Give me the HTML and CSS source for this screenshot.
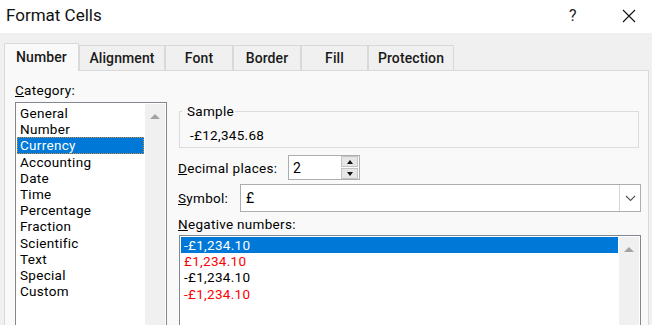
FILE: index.html
```html
<!DOCTYPE html>
<html>
<head>
<meta charset="utf-8">
<link rel="stylesheet" href="styles.css">
</head>
<body>
<div class="window">
  <header class="titlebar">
    <span class="title">Format Cells</span>
    <div class="controls">
      <span class="ctl help">?</span>
      <span class="ctl close"><svg width="14" height="14" viewBox="0 0 14 14"><path d="M1 1 L13 13 M13 1 L1 13" stroke="#111" stroke-width="1.1" fill="none"/></svg></span>
    </div>
  </header>
  <div class="dialog">
    <div class="tabs">
      <div class="tab active t-number">Number</div>
      <div class="tab t-align">Alignment</div>
      <div class="tab t-font">Font</div>
      <div class="tab t-border">Border</div>
      <div class="tab t-fill">Fill</div>
      <div class="tab t-prot">Protection</div>
    </div>
    <div class="panel">
      <div class="left">
        <div class="label"><u>C</u>ategory:</div>
        <div class="listbox cat">
          <ul class="items">
            <li>General</li>
            <li>Number</li>
            <li class="sel focus">Currency</li>
            <li>Accounting</li>
            <li>Date</li>
            <li>Time</li>
            <li>Percentage</li>
            <li>Fraction</li>
            <li>Scientific</li>
            <li>Text</li>
            <li>Special</li>
            <li>Custom</li>
          </ul>
          <div class="scrollbar"><span class="arrow-up"></span></div>
        </div>
      </div>
      <div class="right">
        <fieldset class="sample">
          <legend>Sample</legend>
          <div class="sample-value">-£12,345.68</div>
        </fieldset>
        <div class="row decimal">
          <span class="row-label"><u>D</u>ecimal places:</span>
          <div class="spin">
            <span class="spin-value">2</span>
            <div class="spin-btns">
              <span class="sb"><span class="tri-up"></span></span>
              <span class="sb"><span class="tri-down"></span></span>
            </div>
          </div>
        </div>
        <div class="row symbol">
          <span class="row-label"><u>S</u>ymbol:</span>
          <div class="select">
            <span class="select-value">£</span>
            <span class="dd"><svg width="11" height="7" viewBox="0 0 11 7"><path d="M1 1 L5.5 5.5 L10 1" stroke="#555" stroke-width="1.1" fill="none"/></svg></span>
          </div>
        </div>
        <div class="label neg-label"><u>N</u>egative numbers:</div>
        <div class="listbox neg">
          <ul class="items">
            <li class="sel">-£1,234.10</li>
            <li class="red">£1,234.10</li>
            <li>-£1,234.10</li>
            <li class="red">-£1,234.10</li>
          </ul>
          <div class="scrollbar"><span class="arrow-up"></span></div>
        </div>
      </div>
    </div>
  </div>
</div>
</body>
</html>
```

FILE: styles.css
```css
* { box-sizing: border-box; }
html, body {
  margin: 0;
  padding: 0;
}
body {
  width: 652px;
  height: 325px;
  overflow: hidden;
  background: #f0f0f0;
  font-family: "Segoe UI", Roboto, "Noto Sans", sans-serif;
  font-size: 13.5px;
  letter-spacing: 0.3px;
  color: #000;
}
.window {
  width: 652px;
  height: 325px;
  display: flex;
  flex-direction: column;
  overflow: hidden;
}
.titlebar {
  height: 33px;
  background: #fff;
  display: flex;
  justify-content: space-between;
  align-items: flex-start;
  flex-shrink: 0;
}
.title {
  font-size: 17px;
  line-height: 20px;
  letter-spacing: 0;
  padding: 5px 0 0 6px;
  color: #111;
}
.controls {
  display: flex;
  gap: 10px;
}
.ctl {
  width: 46px;
  height: 33px;
  display: flex;
  align-items: center;
  justify-content: center;
}
.help {
  font-size: 16px;
  color: #222;
  padding-bottom: 3px;
}
.close svg { display: block; margin-top: -1px; }

.dialog {
  flex: 1;
  min-height: 0;
  padding: 10px 3px 0 4px;
  display: flex;
  flex-direction: column;
}
.tabs {
  display: flex;
  align-items: flex-end;
  height: 27px;
  flex-shrink: 0;
  position: relative;
  z-index: 1;
}
.tab {
  height: 25px;
  border: 1px solid #d9d9d9;
  border-bottom: none;
  background: #f0f0f0;
  display: flex;
  align-items: center;
  justify-content: center;
  font-size: 14px;
  font-weight: 500;
  letter-spacing: 0.1px;
  color: #1a1a1a;
  padding-bottom: 1px;
}
.tab.active {
  height: 28px;
  background: #f9f9f9;
  margin-bottom: -1px;
  padding-bottom: 2px;
}
.t-number { width: 75px; }
.t-align { width: 86px; }
.t-font { width: 68px; }
.t-border { width: 68px; }
.t-fill { width: 67px; }
.t-prot { width: 86px; }

.panel {
  flex: 1;
  min-height: 0;
  overflow: hidden;
  background: #f9f9f9;
  border: 1px solid #d9d9d9;
  border-bottom: none;
  padding: 11px 7px 0 10px;
  display: flex;
  gap: 11px;
}
.left {
  width: 152px;
  flex-shrink: 0;
  display: flex;
  flex-direction: column;
}
.label {
  line-height: 16px;
}
.listbox {
  background: #fff;
  border: 1px solid #828790;
  border-bottom: none;
  display: flex;
  padding: 1px 1px 0 1px;
}
.items {
  list-style: none;
  margin: 0;
  padding: 0;
  flex: 1;
}
.items li {
  line-height: 16.2px;
  height: 16.2px;
  padding-left: 3px;
  white-space: nowrap;
}
.items li.sel {
  background: #0078d7;
  color: #fff;
}
.items li.focus {
  outline: 1px dotted #d08a3a;
  outline-offset: -1px;
}
.items li.red { color: #ff0000; }
.scrollbar {
  width: 20px;
  background: #f0f0f0;
  margin-left: 1px;
  display: flex;
  justify-content: center;
  padding-top: 10px;
}
.arrow-up {
  width: 0;
  height: 0;
  border-left: 5px solid transparent;
  border-right: 5px solid transparent;
  border-bottom: 5px solid #a3a3a3;
}
.cat {
  margin-top: 4px;
  flex: 1;
}
.cat .items { padding-top: 1px; }

.right {
  flex: 1;
  display: flex;
  flex-direction: column;
}
.sample {
  margin: 21px 2px 0 1px;
  border: 1px solid #dcdcdc;
  padding: 8px 10px 4px 10px;
  min-width: 0;
}
.sample legend {
  padding: 0 1px 0 5px;
  margin-left: -8px;
  line-height: 16px;
}
.sample-value {
  line-height: 16px;
}
.row {
  display: flex;
  align-items: center;
  flex-shrink: 0;
}
.row-label { line-height: 16px; }
.decimal {
  margin-top: 7px;
}
.decimal .row-label { width: 110px; }
.spin {
  width: 72px;
  height: 25px;
  background: #fff;
  border: 1px solid #adadad;
  display: flex;
  align-items: center;
  padding-left: 4px;
}
.spin-value { flex: 1; font-size: 14px; }
.spin-btns {
  width: 18px;
  height: 23px;
  display: flex;
  flex-direction: column;
  gap: 1px;
  padding: 0 1px 0 0;
}
.sb {
  flex: 1;
  background: #e6e6e6;
  border: 1px solid #c4c4c4;
  display: flex;
  align-items: center;
  justify-content: center;
}
.tri-up {
  border-left: 3.5px solid transparent;
  border-right: 3.5px solid transparent;
  border-bottom: 4px solid #111;
}
.tri-down {
  border-left: 3.5px solid transparent;
  border-right: 3.5px solid transparent;
  border-top: 4px solid #111;
}
.symbol {
  margin-top: 4px;
}
.symbol .row-label { width: 62px; }
.select {
  flex: 1;
  height: 28px;
  background: #fff;
  border: 1px solid #adadad;
  display: flex;
  align-items: center;
  padding-left: 5px;
}
.select-value { flex: 1; font-size: 14px; }
.dd {
  width: 21px;
  height: 26px;
  border-left: 1px solid #d6d6d6;
  display: flex;
  align-items: center;
  justify-content: center;
}
.neg-label {
  margin-top: 4px;
}
.neg {
  margin-top: 3px;
  margin-left: 1px;
  flex: 1;
}
```
